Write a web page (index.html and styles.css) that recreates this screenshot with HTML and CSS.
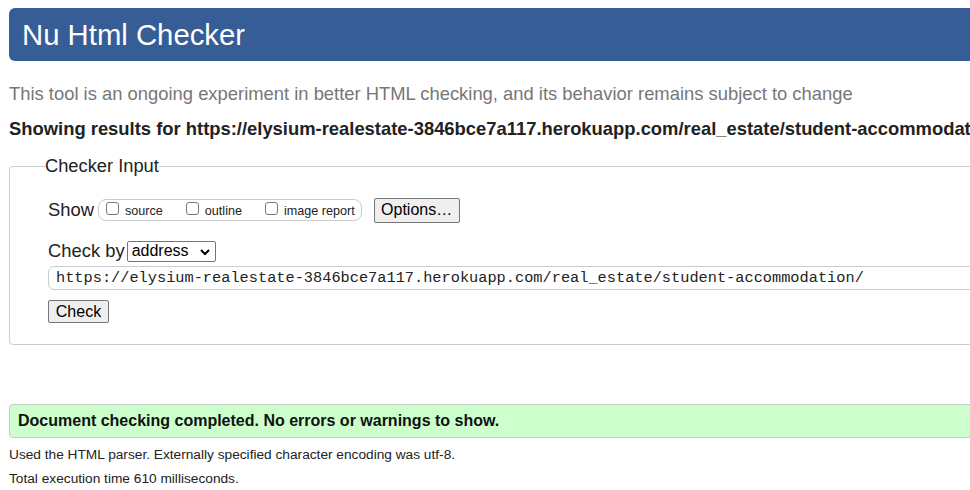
FILE: index.html
```html
<!DOCTYPE html>
<html>
<head>
<meta charset="utf-8">
<link rel="stylesheet" href="styles.css">
</head>
<body>
<div class="page">
  <h1 class="title">Nu Html Checker</h1>
  <p class="intro">This tool is an ongoing experiment in better HTML checking, and its behavior remains subject to change</p>
  <p class="showing">Showing results for https://elysium-realestate-3846bce7a117.herokuapp.com/real_estate/student-accommodation/</p>
  <fieldset class="input-box">
    <legend class="legend">Checker Input</legend>
    <div class="row show-row">
      <span class="label">Show</span>
      <span class="opts">
        <label class="opt"><span class="cb"></span>source</label>
        <label class="opt"><span class="cb"></span>outline</label>
        <label class="opt"><span class="cb"></span>image report</label>
      </span>
      <span class="btn options-btn">Options…</span>
    </div>
    <div class="row check-row">
      <span class="label">Check by</span>
      <span class="select">address<svg class="chev" width="12" height="8" viewBox="0 0 12 8"><path d="M2 2 L6 6 L10 2" fill="none" stroke="#000" stroke-width="2"/></svg></span>
    </div>
    <div class="url">https://elysium-realestate-3846bce7a117.herokuapp.com/real_estate/student-accommodation/</div>
    <div class="row"><span class="btn check-btn">Check</span></div>
  </fieldset>
  <div class="success">Document checking completed. No errors or warnings to show.</div>
  <p class="note">Used the HTML parser. Externally specified character encoding was utf-8.</p>
  <p class="note">Total execution time 610 milliseconds.</p>
</div>
</body>
</html>
```
FILE: styles.css
```css
html, body { margin: 0; padding: 0; overflow: hidden; background: #fff; }
body { font-family: "Liberation Sans", Arial, sans-serif; color: #222; }
.page { width: 1200px; padding: 8px 0 0 9px; }
.title {
  margin: 0; height: 53px; box-sizing: border-box;
  background: #365d95; color: #fff; border-radius: 6px;
  font-weight: normal; font-size: 29.3px; line-height: 53px; padding-left: 13px;
}
.intro { margin: 21px 0 0; font-size: 18.4px; line-height: 24px; color: #777; }
.showing { margin: 11px 0 0; font-size: 18.4px; line-height: 24px; font-weight: bold; color: #222; }
.input-box {
  margin: 14px 0 0; border: 1px solid #ccc; border-radius: 4px;
  padding: 20px 0 21px 38px; min-width: 0;
}
.legend { font-size: 18.3px; padding: 0; margin-left: -3px; color: #222; }
.row { display: flex; align-items: center; }
.label { font-size: 18.4px; }
.show-row { height: 26px; }
.opts {
  display: flex; align-items: center; margin-left: 4px; height: 22px; box-sizing: border-box;
  border: 1px solid #ccc; border-radius: 8px; padding: 1px 6px 0 7px; font-size: 12.6px;
}
.opt { display: flex; align-items: center; margin-right: 23px; }
.opt:last-child { margin-right: 0; }
.cb { width: 13px; height: 13px; box-sizing: border-box; border: 1px solid #767676; border-radius: 3px; margin-right: 6px; margin-top: -4px; background: #fff; }
.btn {
  display: inline-flex; align-items: center; justify-content: center; box-sizing: border-box;
  border: 1px solid #767676; border-radius: 2px; background: #efefef; font-size: 16px; color: #000;
}
.options-btn { margin-left: 12px; width: 86px; height: 25px; }
.check-row { margin-top: 17px; height: 22px; }
.select {
  display: inline-flex; align-items: center; justify-content: space-between; box-sizing: border-box;
  margin-left: 2px; width: 89px; height: 21px; border: 1px solid #767676; border-radius: 2px;
  font-size: 16px; padding: 0 4px 0 4px; color: #000;
}
.chev { margin-top: 1px; }
.url {
  margin-top: 4px; height: 24px; box-sizing: border-box; border: 1px solid #ccc; border-radius: 6px;
  font-family: "Liberation Mono", "Courier New", monospace; font-size: 15.3px; line-height: 22px; padding-left: 7px; color: #222;
}
.check-btn { margin-top: 10px; width: 61px; height: 23px; }
.success {
  margin-top: 59px; height: 34px; box-sizing: border-box; background: #ccffcc; border: 1px solid #c3cfc3;
  border-radius: 4px; font-weight: bold; font-size: 16px; line-height: 32px; padding-left: 8px; color: #111;
}
.note { margin: 8px 0 0; font-size: 13.7px; line-height: 17px; color: #222; }
.note + .note { margin-top: 7px; }
```
